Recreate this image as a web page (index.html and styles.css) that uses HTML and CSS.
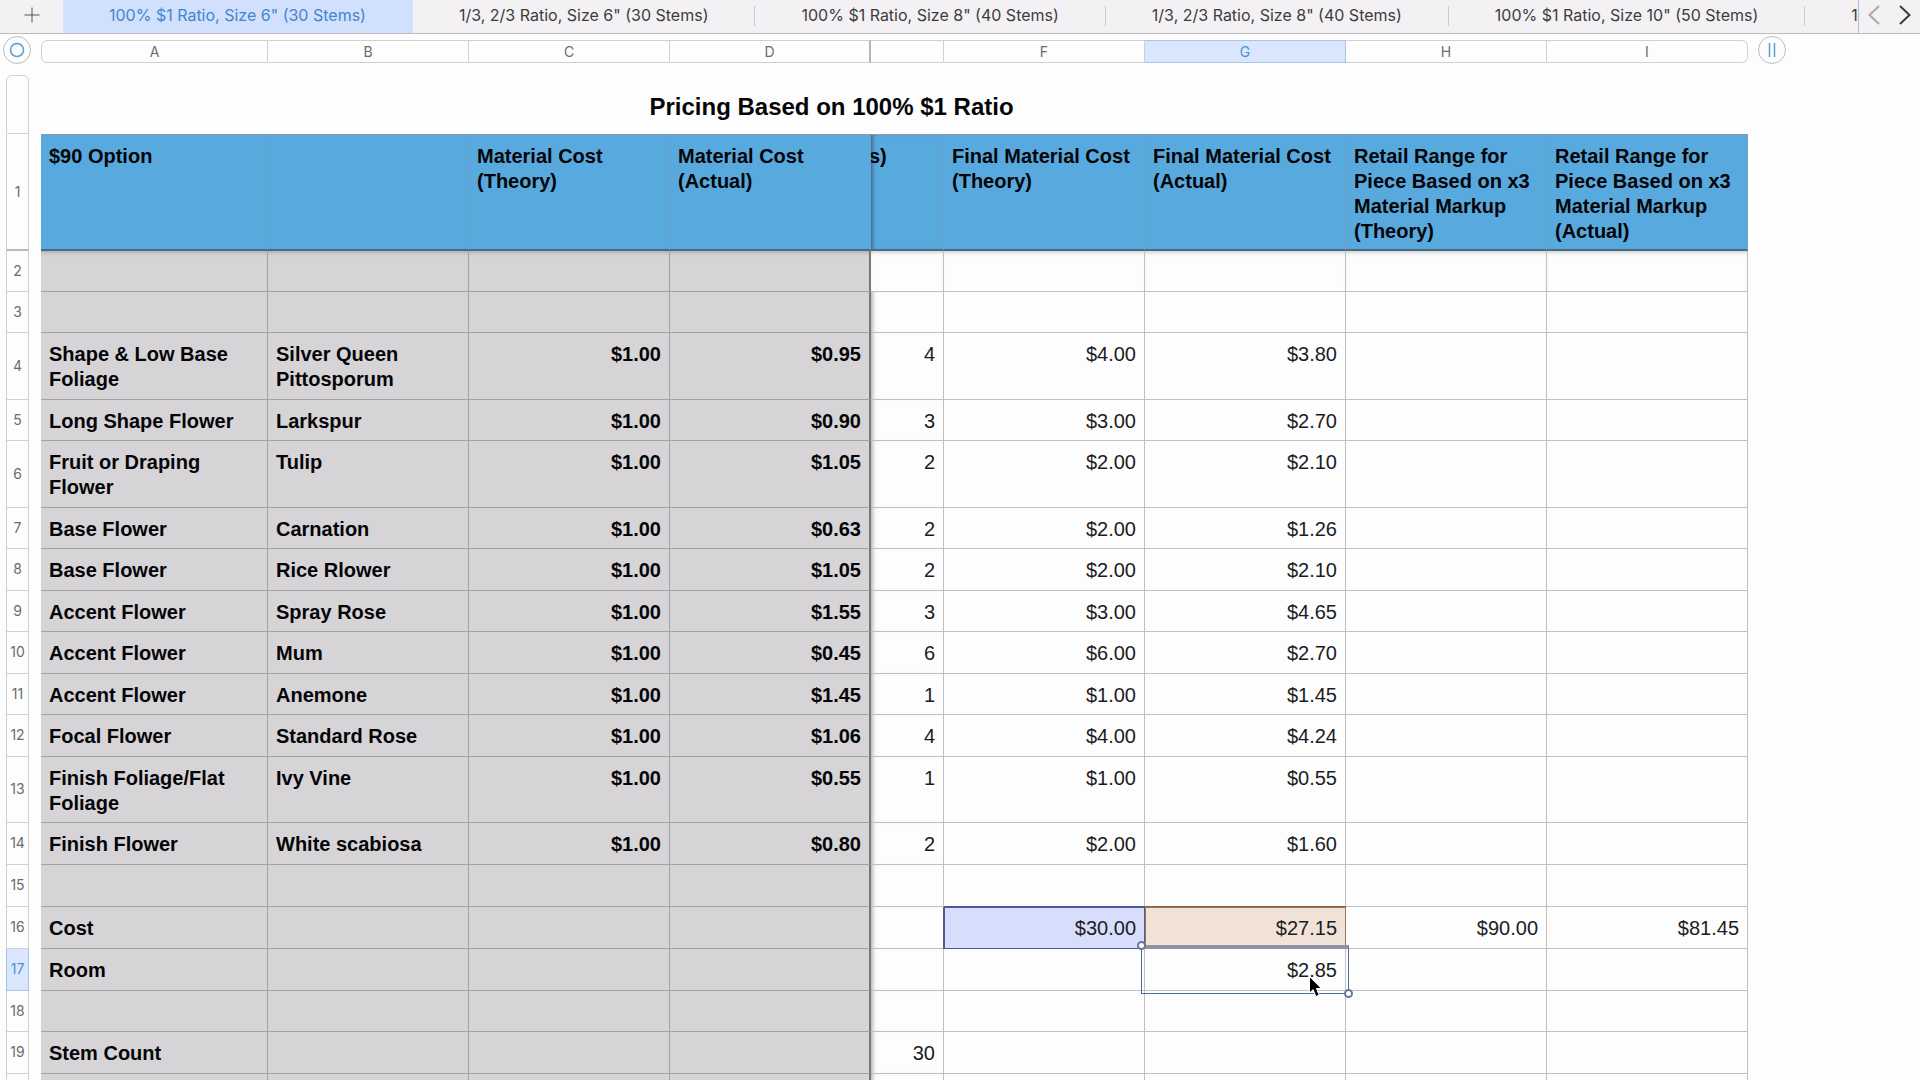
FILE: index.html
```html
<!DOCTYPE html>
<html lang="en">
<head>
    <meta charset="UTF-8">
    <meta name="viewport" content="width=device-width, initial-scale=1.0">
    <title>Pricing Based on 100% $1 Ratio</title>
    <link rel="stylesheet" href="styles.css">
</head>
<body>
    <nav class="tab-bar">
        <button class="add-sheet" aria-label="Add sheet">
            <svg width="16" height="16" viewBox="0 0 16 16"><path d="M8 0.5v15M0.5 8h15"/></svg>
        </button>
        <div class="tabs">
            <button class="tab active">100% $1 Ratio, Size 6" (30 Stems)</button>
            <button class="tab">1/3, 2/3 Ratio, Size 6" (30 Stems)</button>
            <button class="tab">100% $1 Ratio, Size 8" (40 Stems)</button>
            <button class="tab">1/3, 2/3 Ratio, Size 8" (40 Stems)</button>
            <button class="tab">100% $1 Ratio, Size 10" (50 Stems)</button>
            <button class="tab">1/3, 2/3 Ratio, Size 10" (50 Stems)</button>
        </div>
        <div class="tab-arrows">
            <button class="arrow disabled" aria-label="Previous sheets">
                <svg width="12" height="20" viewBox="0 0 12 20"><path d="M11 1L1.500 10L11 19"/></svg>
            </button>
            <button class="arrow" aria-label="More sheets">
                <svg width="12" height="20" viewBox="0 0 12 20"><path d="M1 1L10.500 10L1 19"/></svg>
            </button>
        </div>
    </nav>

    <main class="sheet">
        <table class="grid">
            <colgroup>
                <col class="col-num">
                <col class="col-gap">
                <col class="col-a">
                <col class="col-std">
                <col class="col-std">
                <col class="col-std">
                <col class="col-e">
                <col class="col-std">
                <col class="col-std">
                <col class="col-std">
                <col class="col-std">
            </colgroup>
            <thead>
                <tr class="letters">
                    <td class="corner">
                        <button class="round-button select-all" aria-label="Select table">
                            <svg width="16" height="16" viewBox="0 0 16 16"><circle cx="8" cy="8" r="6.500"/></svg>
                        </button>
                    </td>
                    <td></td>
                    <th class="first">A</th>
                    <th>B</th>
                    <th>C</th>
                    <th class="frozen-edge">D</th>
                    <th></th>
                    <th>F</th>
                    <th class="selected">G</th>
                    <th>H</th>
                    <th class="last">I</th>
                </tr>
                <tr class="spacer"><td colspan="11"></td></tr>
                <tr class="title-row">
                    <th class="num first"></th>
                    <td></td>
                    <th class="title" colspan="9">Pricing Based on 100% $1 Ratio</th>
                </tr>
                <tr class="headings">
                    <th class="num">1</th>
                    <td class="gap"></td>
                    <th>$90 Option</th>
                    <th></th>
                    <th>Material Cost (Theory)</th>
                    <th>Material Cost (Actual)</th>
                    <th class="cut">s)</th>
                    <th>Final Material Cost (Theory)</th>
                    <th>Final Material Cost (Actual)</th>
                    <th>Retail Range for Piece Based on x3 Material Markup (Theory)</th>
                    <th>Retail Range for Piece Based on x3 Material Markup (Actual)</th>
                </tr>
            </thead>
            <tbody>
                <tr class="after-head">
                    <th class="num">2</th><td class="gap"></td>
                    <th></th><th></th><th></th><th></th>
                    <td></td><td></td><td></td><td></td><td></td>
                </tr>
                <tr>
                    <th class="num">3</th><td class="gap"></td>
                    <th></th><th></th><th></th><th></th>
                    <td></td><td></td><td></td><td></td><td></td>
                </tr>
                <tr class="loose">
                    <th class="num">4</th><td class="gap"></td>
                    <th>Shape &amp; Low Base Foliage</th><th>Silver Queen Pittosporum</th><th class="price">$1.00</th><th class="price">$0.95</th>
                    <td>4</td><td>$4.00</td><td>$3.80</td><td></td><td></td>
                </tr>
                <tr>
                    <th class="num">5</th><td class="gap"></td>
                    <th>Long Shape Flower</th><th>Larkspur</th><th class="price">$1.00</th><th class="price">$0.90</th>
                    <td>3</td><td>$3.00</td><td>$2.70</td><td></td><td></td>
                </tr>
                <tr class="loose">
                    <th class="num">6</th><td class="gap"></td>
                    <th>Fruit or Draping Flower</th><th>Tulip</th><th class="price">$1.00</th><th class="price">$1.05</th>
                    <td>2</td><td>$2.00</td><td>$2.10</td><td></td><td></td>
                </tr>
                <tr>
                    <th class="num">7</th><td class="gap"></td>
                    <th>Base Flower</th><th>Carnation</th><th class="price">$1.00</th><th class="price">$0.63</th>
                    <td>2</td><td>$2.00</td><td>$1.26</td><td></td><td></td>
                </tr>
                <tr class="loose">
                    <th class="num">8</th><td class="gap"></td>
                    <th>Base Flower</th><th>Rice Rlower</th><th class="price">$1.00</th><th class="price">$1.05</th>
                    <td>2</td><td>$2.00</td><td>$2.10</td><td></td><td></td>
                </tr>
                <tr>
                    <th class="num">9</th><td class="gap"></td>
                    <th>Accent Flower</th><th>Spray Rose</th><th class="price">$1.00</th><th class="price">$1.55</th>
                    <td>3</td><td>$3.00</td><td>$4.65</td><td></td><td></td>
                </tr>
                <tr class="loose">
                    <th class="num">10</th><td class="gap"></td>
                    <th>Accent Flower</th><th>Mum</th><th class="price">$1.00</th><th class="price">$0.45</th>
                    <td>6</td><td>$6.00</td><td>$2.70</td><td></td><td></td>
                </tr>
                <tr>
                    <th class="num">11</th><td class="gap"></td>
                    <th>Accent Flower</th><th>Anemone</th><th class="price">$1.00</th><th class="price">$1.45</th>
                    <td>1</td><td>$1.00</td><td>$1.45</td><td></td><td></td>
                </tr>
                <tr class="loose">
                    <th class="num">12</th><td class="gap"></td>
                    <th>Focal Flower</th><th>Standard Rose</th><th class="price">$1.00</th><th class="price">$1.06</th>
                    <td>4</td><td>$4.00</td><td>$4.24</td><td></td><td></td>
                </tr>
                <tr>
                    <th class="num">13</th><td class="gap"></td>
                    <th>Finish Foliage/Flat Foliage</th><th>Ivy Vine</th><th class="price">$1.00</th><th class="price">$0.55</th>
                    <td>1</td><td>$1.00</td><td>$0.55</td><td></td><td></td>
                </tr>
                <tr class="loose">
                    <th class="num">14</th><td class="gap"></td>
                    <th>Finish Flower</th><th>White scabiosa</th><th class="price">$1.00</th><th class="price">$0.80</th>
                    <td>2</td><td>$2.00</td><td>$1.60</td><td></td><td></td>
                </tr>
                <tr class="loose">
                    <th class="num">15</th><td class="gap"></td>
                    <th></th><th></th><th></th><th></th>
                    <td></td><td></td><td></td><td></td><td></td>
                </tr>
                <tr class="loose">
                    <th class="num">16</th><td class="gap"></td>
                    <th>Cost</th><th></th><th></th><th></th>
                    <td></td><td class="ref ref-blue">$30.00</td><td class="ref ref-orange">$27.15</td><td>$90.00</td><td>$81.45</td>
                </tr>
                <tr class="loose">
                    <th class="num selected">17</th><td class="gap"></td>
                    <th>Room</th><th></th><th></th><th></th>
                    <td></td><td></td>
                    <td class="current">$2.85
                        <span class="selection"></span>
                        <svg class="cursor" width="16" height="24" viewBox="0 0 16 24"><path d="M1.500 1.500v16.500l3.700-3.400 2.700 6.900 3.300-1.400-2.800-6.600h5z"/></svg>
                    </td>
                    <td></td><td></td>
                </tr>
                <tr>
                    <th class="num">18</th><td class="gap"></td>
                    <th></th><th></th><th></th><th></th>
                    <td></td><td></td><td></td><td></td><td></td>
                </tr>
                <tr class="loose">
                    <th class="num">19</th><td class="gap"></td>
                    <th>Stem Count</th><th></th><th></th><th></th>
                    <td>30</td><td></td><td></td><td></td><td></td>
                </tr>
                <tr>
                    <th class="num"></th><td class="gap"></td>
                    <th></th><th></th><th></th><th></th>
                    <td></td><td></td><td></td><td></td><td></td>
                </tr>
            </tbody>
        </table>
        <button class="round-button add-column" aria-label="Add column">
            <svg width="16" height="16" viewBox="0 0 16 16"><path d="M5.500 1v14M10.500 1v14"/></svg>
        </button>
    </main>
</body>
</html>
```
FILE: styles.css
```css
:root {
    --header-blue: #58a9dd;
    --frozen-gray: #d6d4d7;
    --line: rgba(0, 0, 0, 0.24);
    --ruler-line: #d0d0d0;
    --accent: #4b93cf;
    --accent-light: #d9e6fd;
}

*,
*::before,
*::after {
    box-sizing: border-box;
}

body {
    margin: 0;
    height: 100vh;
    overflow: hidden;
    background: #fdfdfd;
    color: #050508;
    font-family: "Liberation Sans", Arial, sans-serif;
    font-size: 20px;
    line-height: 25px;
}

button {
    margin: 0;
    padding: 0;
    border: none;
    background: none;
    font: inherit;
    color: inherit;
}

svg {
    display: block;
    fill: none;
    stroke: currentColor;
}

/* Sheet tabs */

.tab-bar {
    display: flex;
    height: 34px;
    background: #f3f1f4;
    border-bottom: 1px solid #bdbbbf;
    color: #3c3c3e;
    font-family: Inter, "Liberation Sans", sans-serif;
    font-size: 16px;
}

.add-sheet {
    flex: none;
    display: flex;
    align-items: center;
    justify-content: center;
    width: 63px;
    padding-bottom: 3px;
    color: #555;
}

.tabs {
    flex: 1;
    display: flex;
    min-width: 0;
    overflow: hidden;
}

.tab {
    position: relative;
    flex: none;
    padding: 0 47px 2px 46px;
    white-space: nowrap;
}

.tab:not(.active)::after {
    content: "";
    position: absolute;
    top: 6px;
    right: 0;
    width: 1px;
    height: 20px;
    background: #cbc9cd;
}

.tab.active {
    background: #d0e0fd;
    color: #4585cc;
}

.tab-arrows {
    flex: none;
    display: flex;
    align-items: center;
    justify-content: space-between;
    width: 62px;
    padding: 0 9px 3px;
    border-left: 1px solid #bdbbbf;
}

.arrow svg {
    stroke-width: 2;
}

.arrow.disabled {
    color: #a9a8ab;
}

/* Spreadsheet */

.sheet {
    display: flex;
    align-items: flex-start;
    gap: 10px;
    padding: 2px 0 0 6px;
}

.grid {
    flex: none;
    margin-top: 4px;
    border-collapse: separate;
    border-spacing: 0;
}

.col-num { width: 23px; }
.col-gap { width: 12px; }
.col-a { width: 227px; }
.col-std { width: 201px; }
.col-e { width: 73px; }

.grid td,
.grid th {
    padding: 0;
    vertical-align: top;
}

.letters th,
.grid .num {
    color: #6c6c6c;
    font-family: Inter, "Liberation Sans", sans-serif;
    font-size: 14px;
    font-weight: 400;
    line-height: 21px;
    text-align: center;
}

.letters th {
    height: 23px;
    border: 1px solid var(--ruler-line);
    border-left: none;
}

.letters .first {
    border-left: 1px solid var(--ruler-line);
    border-radius: 6px 0 0 6px;
}

.letters .last {
    border-radius: 0 6px 6px 0;
}

.letters .frozen-edge {
    border-right: 2px solid #b5b5b5;
}

.corner {
    position: relative;
}

.round-button {
    display: flex;
    flex: none;
    align-items: center;
    justify-content: center;
    width: 28px;
    height: 28px;
    border: 1px solid #b9bcbd;
    border-radius: 50%;
    color: #5aa0c8;
}

.select-all {
    position: absolute;
    top: -4px;
    left: -3px;
}

.round-button svg {
    stroke-width: 1.5;
}

.spacer td {
    height: 12px;
}

.title-row th {
    height: 59px;
}

/* the scrolled-away part of column E still counts when centering the title */
.title-row .title {
    padding: 3px 126px 0 0;
    font-size: 24px;
    text-align: center;
    vertical-align: middle;
}

.grid .num {
    border: solid var(--ruler-line);
    border-width: 0 1px 1px;
    background: none;
    vertical-align: middle;
}

.grid .num.first {
    border-top-width: 1px;
    border-radius: 6px 6px 0 0;
}

.letters .selected,
.grid .num.selected {
    background: var(--accent-light);
    border-color: #a9c4e4;
    color: var(--accent);
}

.headings th:not(.num) {
    padding: 9px 8px 5px;
    border-top: 1px solid #8c9ba8;
    border-right: 1px solid #6f9fc4;
    border-bottom: 2px solid #4b6b82;
    background: var(--header-blue);
    text-align: left;
}

.grid .headings .num {
    border-bottom: 2px solid #bbb;
}

/* tail of a heading that runs under the frozen columns */
.grid .headings .cut {
    overflow: hidden;
    text-indent: -10px;
    box-shadow: inset 4px 0 4px -3px rgba(0, 0, 0, 0.5);
}

tbody th,
tbody td {
    height: 41px;
    border-right: 1px solid var(--line);
    border-bottom: 1px solid var(--line);
}

.grid tbody th,
.grid tbody td {
    padding: 9px 8px 6px;
}

.grid tbody .loose th,
.grid tbody .loose td {
    height: 42px;
    padding-bottom: 7px;
}

.grid tbody .num,
.grid tbody .loose .num,
.grid tbody .gap,
.grid tbody .loose .gap {
    padding: 0 0 2px;
}

.grid .gap {
    border: none;
}

tbody th {
    background: var(--frozen-gray);
    text-align: left;
}

tbody th.price,
tbody td {
    text-align: right;
}

tbody td {
    color: #1c1c1f;
}

/* edge of the frozen columns */
tbody th:nth-child(6) {
    border-right: 2px solid #77767a;
}

tbody td:nth-child(7) {
    box-shadow: inset 5px 0 5px -4px rgba(0, 0, 0, 0.4);
}

.after-head th:not(.num),
.after-head td:not(.gap) {
    box-shadow: inset 0 4px 4px -3px rgba(0, 0, 0, 0.25);
}

.ref {
    outline: 1px solid;
    outline-offset: -1px;
}

.ref-blue {
    background: #d7defb;
    outline-color: #4c5a9c;
    box-shadow: 0 -1px 0 #4c5a9c, -1px 0 0 #4c5a9c;
}

.ref-orange {
    background: #f1e2d8;
    outline-color: #a9744a;
    box-shadow: 0 -1px 0 #7d6244;
}

.current {
    position: relative;
}

.selection {
    position: absolute;
    inset: -4px;
    border: 1px solid #4a709b;
    border-top: 4px solid #93909f;
}

.selection::before,
.selection::after {
    content: "";
    position: absolute;
    width: 9px;
    height: 9px;
    border: 2px solid #6875a0;
    border-radius: 50%;
    background: #fff;
}

.selection::before {
    top: -8px;
    left: -5px;
}

.selection::after {
    right: -5px;
    bottom: -5px;
}

.cursor {
    position: absolute;
    top: 26px;
    right: 21px;
    fill: #000;
    stroke: #fff;
}
```
